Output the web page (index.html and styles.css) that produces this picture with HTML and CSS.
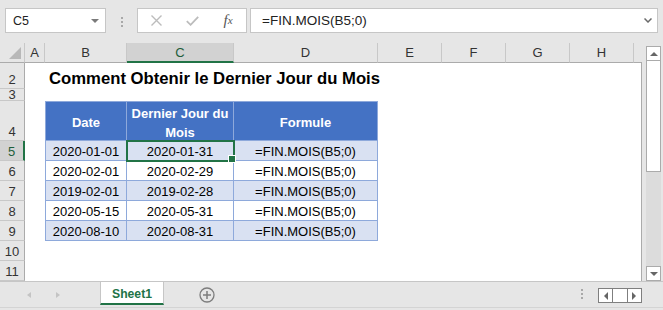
FILE: index.html
```html
<!DOCTYPE html>
<html lang="fr">
<head>
    <meta charset="UTF-8">
    <title>Comment Obtenir le Dernier Jour du Mois</title>
    <link rel="stylesheet" href="styles.css">
</head>
<body>
    <!-- barre de formule -->
    <div class="formula-bar">
        <div class="name-box">
            <span>C5</span>
            <span class="caret"></span>
        </div>
        <div class="grip"><i></i><i></i><i></i></div>
        <div class="fx-box">
            <span>
                <svg width="13" height="11" viewBox="0 0 13 11"><path d="M1.5 0.5 L11.5 10.5 M11.5 0.5 L1.5 10.5" stroke="#bcbcbc" stroke-width="1.4" fill="none"/></svg>
            </span>
            <span>
                <svg width="13" height="10" viewBox="0 0 13 10"><path d="M0.8 5.2 L4.6 8.8 L12.2 0.8" stroke="#bcbcbc" stroke-width="1.8" fill="none"/></svg>
            </span>
            <span class="fx">f<sub>x</sub></span>
        </div>
        <div class="formula-input">
            <span>=FIN.MOIS(B5;0)</span>
            <svg width="8" height="5" viewBox="0 0 8 5"><path d="M0.5 0.5 L4 4 L7.5 0.5" stroke="#6a6a6a" stroke-width="1.5" fill="none"/></svg>
        </div>
    </div>

    <!-- feuille -->
    <div class="workspace">
        <div class="sheet">
            <div class="col-head">
                <div class="corner"><span></span></div>
                <div>A</div>
                <div>B</div>
                <div class="on">C</div>
                <div>D</div>
                <div>E</div>
                <div>F</div>
                <div>G</div>
                <div>H</div>
                <div class="last"></div>
            </div>
            <div class="sheet-body">
                <div class="row-head">
                    <div class="r2">2</div>
                    <div class="r3">3</div>
                    <div class="r4">4</div>
                    <div class="on">5</div>
                    <div>6</div>
                    <div>7</div>
                    <div>8</div>
                    <div>9</div>
                    <div>10</div>
                    <div>11</div>
                </div>
                <div class="cells">
                    <div class="title">Comment Obtenir le Dernier Jour du Mois</div>
                    <div class="xl-table">
                        <div class="th">Date</div>
                        <div class="th">Dernier Jour du Mois</div>
                        <div class="th">Formule</div>

                        <div class="band">2020-01-01</div>
                        <div class="band sel">2020-01-31</div>
                        <div class="band">=FIN.MOIS(B5;0)</div>

                        <div>2020-02-01</div>
                        <div>2020-02-29</div>
                        <div>=FIN.MOIS(B5;0)</div>

                        <div class="band">2019-02-01</div>
                        <div class="band">2019-02-28</div>
                        <div class="band">=FIN.MOIS(B5;0)</div>

                        <div>2020-05-15</div>
                        <div>2020-05-31</div>
                        <div>=FIN.MOIS(B5;0)</div>

                        <div class="band">2020-08-10</div>
                        <div class="band">2020-08-31</div>
                        <div class="band">=FIN.MOIS(B5;0)</div>
                    </div>
                </div>
            </div>
        </div>
        <div class="vscroll">
            <div class="sb-btn"><span class="tri-up"></span></div>
            <div class="sb-thumb"></div>
            <div class="sb-track"></div>
            <div class="sb-btn"><span class="tri-down"></span></div>
        </div>
    </div>

    <!-- onglets -->
    <div class="tabbar">
        <div class="tab-nav">
            <span class="tri-left"></span>
            <span class="tri-right"></span>
        </div>
        <div class="tab">Sheet1</div>
        <div class="add">
            <svg width="16" height="16" viewBox="0 0 16 16"><circle cx="8" cy="8" r="7" stroke="#7d7d7d" stroke-width="1.3" fill="none"/><path d="M8 4 V12 M4 8 H12" stroke="#7d7d7d" stroke-width="1.5"/></svg>
        </div>
        <div class="grip h-grip"><i></i><i></i><i></i></div>
        <div class="hnav">
            <span><b class="dark-left"></b></span>
            <span></span>
            <span><b class="dark-right"></b></span>
        </div>
    </div>
</body>
</html>
```

FILE: styles.css
```css
/* global */
* {
    margin: 0;
    padding: 0;
    box-sizing: border-box;
}

body {
    width: 663px;
    height: 310px;
    overflow: hidden;
    background-color: #e6e6e6;
    font-family: "Liberation Sans", Arial, sans-serif;
    color: #222;
}

/* barre de formule */
.formula-bar {
    display: flex;
    height: 43px;
    padding: 8px 0 0 5px;
}

.name-box {
    width: 101px;
    height: 25px;
    background-color: #fff;
    border: 1px solid #c6c6c6;
    display: flex;
    align-items: center;
    justify-content: space-between;
    padding: 0 6px 0 7px;
    font-size: 12.5px;
}

.caret {
    width: 0;
    height: 0;
    border-left: 4px solid transparent;
    border-right: 4px solid transparent;
    border-top: 4px solid #7a7a7a;
}

.grip {
    width: 31px;
    display: flex;
    flex-direction: column;
    align-items: center;
    padding-top: 9px;
    gap: 2px;
}

.grip i {
    width: 2px;
    height: 2px;
    background-color: #a8a8a8;
}

.fx-box {
    width: 110px;
    height: 25px;
    background-color: #fff;
    border: 1px solid #c6c6c6;
    display: flex;
    align-items: center;
}

.fx-box span {
    width: 36px;
    display: flex;
    justify-content: center;
    align-items: center;
}

.fx-box .fx {
    font-family: "Liberation Serif", "Times New Roman", serif;
    font-style: italic;
    font-size: 15px;
    color: #555;
    line-height: 1;
}

.fx-box .fx sub {
    font-size: 11px;
    vertical-align: -1px;
}

.formula-input {
    margin-left: 3px;
    width: 408px;
    height: 25px;
    background-color: #fff;
    border: 1px solid #c6c6c6;
    display: flex;
    align-items: center;
    justify-content: space-between;
    padding: 0 5px 0 11px;
    font-size: 13.5px;
}

/* feuille */
.workspace {
    display: flex;
    height: 238px;
}

.sheet {
    width: 642px;
    display: flex;
    flex-direction: column;
}

.col-head {
    display: grid;
    grid-template-columns: 25px 20px 82px 107px 144px 64px 64px 64px 64px 8px;
    height: 20px;
}

.col-head div {
    border-right: 1px solid #c8c8c8;
    border-bottom: 1px solid #ababab;
    display: flex;
    align-items: center;
    justify-content: center;
    font-size: 13px;
    color: #333;
}

.col-head .on {
    background-color: #d2d2d2;
    border-bottom: 2px solid #217346;
    color: #1e5e3a;
}

.col-head .last {
    border-right: none;
}

.col-head .corner {
    justify-content: flex-end;
    align-items: flex-end;
    padding: 0 3px 3px 0;
}

.corner span {
    width: 12px;
    height: 12px;
    background-color: #b8b8b8;
    clip-path: polygon(100% 0, 100% 100%, 0 100%);
}

.sheet-body {
    display: flex;
    flex: 1;
}

.row-head {
    width: 25px;
    display: flex;
    flex-direction: column;
}

.row-head div {
    height: 20px;
    border-right: 1px solid #ababab;
    border-bottom: 1px solid #c8c8c8;
    display: flex;
    align-items: flex-end;
    justify-content: center;
    font-size: 13px;
    line-height: 16px;
    color: #333;
    overflow: hidden;
}

.row-head .r2 {
    height: 26px;
}

.row-head .r3 {
    height: 12px;
    line-height: 11px;
}

.row-head .r4 {
    height: 40px;
}

.row-head .on {
    background-color: #d2d2d2;
    border-right: 2px solid #217346;
    color: #1e5e3a;
}

.cells {
    flex: 1;
    display: grid;
    grid-template-columns: 20px 82px 107px 144px 64px 64px 64px 64px 7px;
    grid-template-rows: 26px 12px 40px repeat(7, 20px);
    background-color: #fff;
    border-right: 1px solid #ababab;
}

.title {
    grid-column: 2 / 6;
    grid-row: 1;
    align-self: end;
    padding-left: 4px;
    font-weight: bold;
    font-size: 16.7px;
    line-height: 20px;
    white-space: nowrap;
    color: #000;
}

/* tableau */
.xl-table {
    grid-column: 2 / 5;
    grid-row: 3 / 9;
    display: grid;
    grid-template-columns: 81px 107px 144px;
    grid-template-rows: 39px repeat(5, 20px);
    border-left: 1px solid #8ea9db;
    border-top: 1px solid #8ea9db;
}

.xl-table div {
    border-right: 1px solid #8ea9db;
    border-bottom: 1px solid #8ea9db;
    display: flex;
    justify-content: center;
    align-items: flex-end;
    text-align: center;
    font-size: 13px;
    line-height: 16px;
    color: #000;
}

.xl-table .th {
    background-color: #4472c4;
    color: #fff;
    font-weight: bold;
    align-items: center;
    line-height: 19px;
    padding-top: 3px;
}

.xl-table .band {
    background-color: #d9e1f2;
}

.xl-table .sel {
    position: relative;
    z-index: 1;
    outline: 2px solid #217346;
    outline-offset: -1px;
}

.xl-table .sel::after {
    content: "";
    position: absolute;
    right: -3px;
    bottom: -3px;
    width: 6px;
    height: 6px;
    background-color: #217346;
    border: 1px solid #fff;
}

/* barre de défilement */
.vscroll {
    width: 15px;
    margin-left: 4px;
    padding-top: 3px;
    display: flex;
    flex-direction: column;
}

.sb-btn {
    height: 15px;
    background-color: #fff;
    border: 1px solid #ababab;
    display: flex;
    align-items: center;
    justify-content: center;
}

.sb-thumb {
    height: 112px;
    margin-top: -1px;
    background-color: #fff;
    border: 1px solid #ababab;
}

.sb-track {
    flex: 1;
    background-color: #dcdcdc;
}

.tri-up,
.tri-down {
    width: 0;
    height: 0;
    border-left: 4px solid transparent;
    border-right: 4px solid transparent;
}

.tri-up {
    border-bottom: 4px solid #666;
}

.tri-down {
    border-top: 4px solid #666;
}

/* onglets */
.tabbar {
    height: 27px;
    display: flex;
    align-items: flex-start;
    border-top: 1px solid #c6c6c6;
    border-bottom: 1px solid #d4d4d4;
}

.tab-nav {
    width: 100px;
    height: 25px;
    display: flex;
    align-items: center;
    gap: 25px;
    padding-left: 27px;
}

.tri-left,
.tri-right {
    width: 0;
    height: 0;
    border-top: 3.5px solid transparent;
    border-bottom: 3.5px solid transparent;
}

.tri-left {
    border-right: 4px solid #c4c4c4;
}

.tri-right {
    border-left: 4px solid #c4c4c4;
}

.tab {
    width: 64px;
    height: 23px;
    background-color: #fff;
    border-left: 1px solid #c6c6c6;
    border-right: 1px solid #c6c6c6;
    border-bottom: 2px solid #217346;
    display: flex;
    justify-content: center;
    align-items: center;
    padding-top: 3px;
    color: #217346;
    font-weight: bold;
    font-size: 12.2px;
}

.add {
    margin-left: 35px;
    height: 25px;
    display: flex;
    align-items: center;
}

.h-grip {
    margin-left: auto;
    width: auto;
    padding-top: 7px;
    margin-right: 15px;
}

.hnav {
    margin-top: 6px;
    margin-right: 21px;
    width: 44px;
    height: 15px;
    border: 1px solid #7f7f7f;
    display: flex;
    background-color: #fff;
}

.hnav span {
    flex: 1;
    display: flex;
    align-items: center;
    justify-content: center;
}

.hnav span:nth-child(2) {
    border-left: 1px solid #7f7f7f;
    border-right: 1px solid #7f7f7f;
}

.dark-left,
.dark-right {
    width: 0;
    height: 0;
    border-top: 4px solid transparent;
    border-bottom: 4px solid transparent;
}

.dark-left {
    border-right: 4px solid #666;
}

.dark-right {
    border-left: 4px solid #666;
}
```
